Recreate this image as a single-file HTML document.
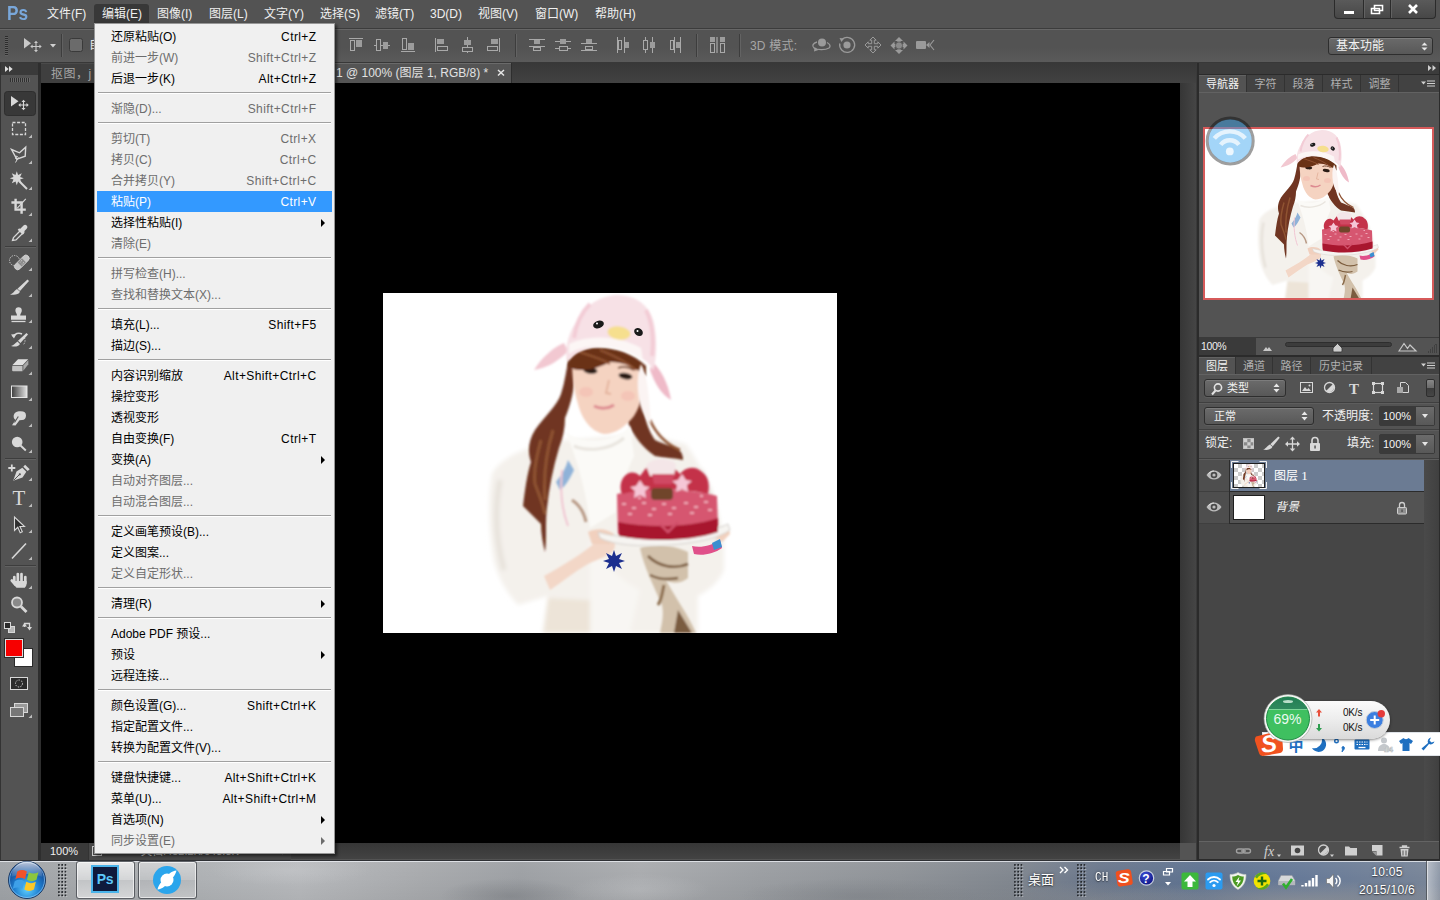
<!DOCTYPE html>
<html lang="zh-CN">
<head>
<meta charset="utf-8">
<title>Photoshop</title>
<style>
*{box-sizing:border-box;margin:0;padding:0}
html,body{width:1440px;height:900px;overflow:hidden;background:#535353}
body{position:relative;font-family:"Liberation Sans","Noto Sans CJK SC",sans-serif;font-size:12px;color:#e6e6e6}
.abs{position:absolute}
svg{position:absolute;overflow:visible}
/* ---------- menubar ---------- */
#menubar{left:0;top:0;width:1440px;height:29px;background:#535353;border-bottom:1px solid #3c3c3c}
#menubar .mi{position:absolute;top:6px;height:18px;line-height:17px;font-size:12px;color:#f0f0f0;white-space:nowrap}
#pslogo{left:7px;top:0;font-size:21px;font-weight:bold;color:#79a7da;line-height:26px;transform:scaleX(.82);transform-origin:left}
#editbtn{left:94px;top:4px;width:55px;height:20px;background:#383838;border-radius:3px 3px 0 0}
/* ---------- options bar ---------- */
#optbar{left:0;top:29px;width:1440px;height:34px;background:linear-gradient(#535353 55%,#5a5a5a);border-top:1px solid #676767;border-bottom:1px solid #383838}
/* ---------- tabs ---------- */
#tabbar{left:41px;top:63px;width:1156px;height:20px;background:linear-gradient(#383838,#424242)}
/* ---------- canvas ---------- */
#canvas{left:41px;top:83px;width:1139px;height:760px;background:#000}
#doc{left:383px;top:293px;width:454px;height:340px;background:#fff;overflow:hidden}
/* ---------- edit menu ---------- */
#editmenu{left:94px;top:23px;width:241px;height:831px;background:#f0f0f0;border:1px solid #979797;padding:2px;box-shadow:2px 2px 3px rgba(0,0,0,.55)}
#editmenu .it{position:relative;height:21px;line-height:23px;overflow:hidden;font-size:12px;color:#000;white-space:nowrap}
#editmenu .it .l{position:absolute;left:14px;top:0}
#editmenu .it .s{position:absolute;right:15.500px;top:0;letter-spacing:.4px}
#editmenu .it.dis{color:#6d6d6d}
#editmenu .it.hl{background:#3399ff;color:#fff}
#editmenu .sep{height:9px;position:relative}
#editmenu .sep:after{content:"";position:absolute;left:1px;right:1px;top:3px;height:1px;background:#a0a0a0;border-bottom:1px solid #fff;box-sizing:content-box}
#editmenu .ar{position:absolute;right:7px;top:6.500px;width:0;height:0;border-left:4px solid #000;border-top:4px solid transparent;border-bottom:4px solid transparent}
#editmenu .dis .ar{border-left-color:#6d6d6d}
/* ---------- toolbox ---------- */
#toolcol{left:0;top:63px;width:41px;height:797px;background:#535353;border-left:1px solid #333;border-right:3px solid #2e2e2e;box-shadow:inset 0 0 0 0 #000}
#toolhdr{left:1px;top:63px;width:37px;height:12px;background:#3a3a3a}
#toolgrip{left:10px;top:78px;width:20px;height:4px;background:repeating-linear-gradient(90deg,#2f2f2f 0 1px,#6a6a6a 1px 2px)}
#wsbtn{left:1328px;top:37px;width:105px;height:18px;border:1px solid #2e2e2e;border-radius:3px;background:linear-gradient(#6a6a6a,#585858);box-shadow:inset 0 1px 0 #7d7d7d;font-size:12px;line-height:17px;color:#f2f2f2;padding-left:7px}
#winctl{left:1334px;top:0;width:102px;height:19px;border:1px solid #2b2b2b;border-top:0;border-radius:0 0 4px 4px;background:linear-gradient(#5a5a5a,#474747)}
#winctl i{position:absolute;top:0;width:1px;height:18px;background:#2b2b2b;box-shadow:1px 0 0 #626262}
#tab1{left:41px;top:63px;width:159px;height:20px;background:#3f3f3f;border-right:1px solid #2e2e2e;box-shadow:inset 0 1px 0 #4a4a4a;font-size:12px;color:#a6a6a6;padding-left:10px;letter-spacing:.5px;line-height:23px;overflow:hidden}
#tab2{left:200px;top:63px;width:312px;height:20px;background:#545454;box-shadow:inset 0 1px 0 #6a6a6a;font-size:12px;line-height:21px;color:#e2e2e2;border-right:1px solid #2e2e2e}
#tab2 span{position:absolute;left:136px;top:0;white-space:nowrap}
#tab2 b{position:absolute;right:180px;top:0;font-weight:normal;white-space:nowrap}
/* ---------- right panels ---------- */
#vscroll{left:1180px;top:83px;width:16px;height:760px;background:linear-gradient(90deg,#363636,#454545)}
#corner{left:1180px;top:843px;width:16px;height:16px;background:#545454}
#dock{left:1196px;top:63px;width:244px;height:797px;background:#2b2b2b;border-left:1px solid #3a3a3a}
#dockhdr{left:1199px;top:63px;width:240px;height:11px;background:#3c3c3c}
.tabs{background:#424242;height:17px;font-size:11px}
.tabs span{position:absolute;top:0;height:17px;line-height:19px;text-align:center;color:#b0b0b0;background:#424242;border-right:1px solid #333;white-space:nowrap}
.tabs span.on{background:#535353;color:#f4f4f4;height:18px;box-shadow:inset 0 1px 0 #626262}
#navtabs{left:1199px;top:75px;width:240px}
#navbody{left:1199px;top:92px;width:240px;height:245px;background:#535353;border-top:1px solid #626262}
#navthumb{left:1203px;top:127px;width:231px;height:173px;background:#fff;border:2px solid #d65a5a;overflow:hidden}
#wifi{left:1205px;top:116px;width:50px;height:50px}
#navfoot{left:1199px;top:337px;width:240px;height:18px;background:#535353;border-top:1px solid #3a3a3a}
#navzoom{position:absolute;left:0;top:0;width:57px;height:17px;background:#3a3a3a;color:#f0f0f0;font-size:10.500px;line-height:17px;padding-left:2px;letter-spacing:-.4px}
#laytabs{left:1199px;top:357px;width:240px}
#laybody{left:1199px;top:374px;width:240px;height:86px;background:#535353;border-top:1px solid #626262}
.dd{border:1px solid #2e2e2e;border-radius:3px;background:linear-gradient(#6b6b6b,#585858);box-shadow:inset 0 1px 0 #7c7c7c,0 1px 0 #5e5e5e;font-size:11px;color:#f2f2f2}
.dd span{position:absolute;top:0;line-height:16px;white-space:nowrap}
.dd .ud{right:5px;top:3px}
.hr{left:1199px;width:240px;height:2px;background:#3f3f3f;border-bottom:1px solid #5d5d5d}
.lbl{font-size:12px;line-height:18px;color:#f0f0f0;white-space:nowrap}
.fld{width:56px;height:20px;border:1px solid #3a3a3a;border-radius:2px;background:#3a3a3a}
.fld span{position:absolute;left:3px;top:0;font-size:11px;line-height:18px;color:#f4f4f4}
.fld i{position:absolute;left:35px;top:0;width:19px;height:18px;background:linear-gradient(#6b6b6b,#585858);border-left:1px solid #3a3a3a}
.fld i:after{content:"";position:absolute;left:6px;top:7px;border:3.500px solid transparent;border-top:4px solid #e6e6e6;border-bottom:0}
#lrow1{left:1230px;top:460px;width:194px;height:31px;background:#6b7b93}
#lrow2{left:1230px;top:492px;width:194px;height:31px;background:#535353}
#eyecol{left:1199px;top:460px;width:30px;height:64px;background:linear-gradient(#4e4e4e 0 31px,#3f3f3f 31px 32px,#4e4e4e 32px 63px,#3f3f3f 63px)}
#lthumb1{left:1233px;top:463px;width:32px;height:25px;border:1px solid #1e1e1e;background:#fff;background-image:linear-gradient(45deg,#ccc 25%,transparent 25%,transparent 75%,#ccc 75%),linear-gradient(45deg,#ccc 25%,transparent 25%,transparent 75%,#ccc 75%);background-size:8px 8px;background-position:0 0,4px 4px;overflow:hidden}
#lthumb2{left:1233px;top:495px;width:32px;height:25px;border:1px solid #1e1e1e;background:#fff}
#layempty{left:1199px;top:524px;width:225px;height:317px;background:#464646}
#layscroll{left:1424px;top:460px;width:15px;height:381px;background:linear-gradient(90deg,#4a4a4a,#404040)}
#layfoot{left:1199px;top:841px;width:240px;height:18px;background:#505050;border-top:1px solid #646464}
/* ---------- taskbar ---------- */
#taskbar{left:0;top:860px;width:1440px;height:40px;overflow:hidden;background:linear-gradient(90deg,#9fa3a7 0,#a4a7aa 60px,#aeb1b4 200px,#b6b8bb 300px,#a8aaad 420px,#9da0a4 520px,#a9abae 640px,#9b9ea2 760px,#8f9398 900px,#81878f 1010px,#6a778c 1100px,#5f7391 1200px,#677a98 1300px,#7a8698 1440px)}
#tbclouds{position:absolute;left:0;top:0;width:1440px;height:40px;background:radial-gradient(ellipse 70px 16px at 640px 30px,rgba(190,192,195,.5),transparent),radial-gradient(ellipse 80px 16px at 290px 10px,rgba(200,202,205,.45),transparent),radial-gradient(ellipse 70px 18px at 510px 36px,rgba(125,128,133,.55),transparent),radial-gradient(ellipse 120px 18px at 860px 36px,rgba(120,124,130,.4),transparent),radial-gradient(ellipse 220px 22px at 1300px 42px,rgba(150,152,156,.8),transparent),radial-gradient(ellipse 120px 18px at 1090px 40px,rgba(140,144,150,.6),transparent)}
#tbshade{position:absolute;left:0;top:0;width:1440px;height:40px;border-top:1px solid #2e3034;box-shadow:inset 0 1px 0 rgba(235,238,242,.8);background:linear-gradient(rgba(255,255,255,.05),rgba(255,255,255,0) 45%,rgba(0,0,0,.04))}
.tbgrip{position:absolute;top:4px;width:10px;height:33px;background-image:radial-gradient(circle at 1px 1px,#23262a .75px,transparent 1.150px),radial-gradient(circle at 2px 2px,rgba(255,255,255,.45) .6px,transparent 1px);background-size:3.300px 3.400px}
.tbbtn{position:absolute;top:1px;width:59px;height:38px;border:1px solid rgba(60,64,70,.8);border-radius:3px;background:linear-gradient(rgba(255,255,255,.72),rgba(255,255,255,.5) 50%,rgba(255,255,255,.32) 50%,rgba(255,255,255,.55));box-shadow:inset 0 0 0 1px rgba(255,255,255,.6)}
.tbbtn.b2{background:linear-gradient(rgba(255,255,255,.42),rgba(255,255,255,.25) 50%,rgba(255,255,255,.1) 50%,rgba(255,255,255,.3))}
#psicon{left:91px;top:5px;width:28px;height:28px;background:#0f1a3c;border:2px solid #4bb4ea;color:#5cc8fa;font-weight:bold;font-size:14px;line-height:24px;text-align:center;letter-spacing:-.2px}
.tbt{color:#fff;white-space:nowrap;text-shadow:0 0 3px rgba(0,0,0,.55),0 1px 1px rgba(0,0,0,.4)}
#showdesk{left:1426px;top:1px;width:14px;height:39px;border-left:1px solid rgba(60,64,70,.7);background:linear-gradient(90deg,rgba(255,255,255,.45),rgba(255,255,255,.15));box-shadow:inset 1px 0 0 rgba(255,255,255,.5)}
/* ---------- status + widgets ---------- */
#status{left:41px;top:843px;width:1139px;height:16px;background:linear-gradient(#363636,#434343)}
#stzoom{position:absolute;left:0;top:0;width:47px;height:17px;background:#3a3a3a;font-size:11px;line-height:17px;color:#f0f0f0;padding-left:9px}
#stinfo{position:absolute;left:47px;top:0;width:203px;height:17px;background:#484848;border-left:1px solid #333}
#stinfo span{position:absolute;left:52px;top:0;font-size:11px;line-height:17px;color:#e0e0e0;white-space:nowrap}
#sgbar{left:1262px;top:732px;width:178px;height:24px;background:#fff;border:1px solid #dfe3e8;border-right:0;overflow:hidden}
#pill{left:1298px;top:701px;width:92px;height:38px;border-radius:0 19px 19px 0;background:linear-gradient(#fbfbfb,#ececec 50%,#dadada);box-shadow:0 1px 3px rgba(0,0,0,.5)}
#pill span{position:absolute;left:45px;font-size:10px;line-height:12px;color:#111;letter-spacing:-.2px}
</style>
</head>
<body>

<!-- ===== MENUBAR ===== -->
<div id="menubar" class="abs">
  <div id="pslogo" class="abs">Ps</div>
  <div id="editbtn" class="abs"></div>
  <div class="mi" style="left:47px">文件(F)</div>
  <div class="mi" style="left:102px">编辑(E)</div>
  <div class="mi" style="left:157px">图像(I)</div>
  <div class="mi" style="left:209px">图层(L)</div>
  <div class="mi" style="left:264px">文字(Y)</div>
  <div class="mi" style="left:320px">选择(S)</div>
  <div class="mi" style="left:375px">滤镜(T)</div>
  <div class="mi" style="left:430px">3D(D)</div>
  <div class="mi" style="left:478px">视图(V)</div>
  <div class="mi" style="left:535px">窗口(W)</div>
  <div class="mi" style="left:595px">帮助(H)</div>
</div>

<!-- ===== OPTIONS BAR ===== -->
<div id="optbar" class="abs"></div>
<svg id="optsvg" width="1440" height="34" style="left:0;top:29px" viewBox="0 29 1440 34"><path d="M6.500 36v19" stroke="#2c2c2c" stroke-width="3" stroke-dasharray="1 1"/><path d="M6.500 37v19" stroke="#6a6a6a" stroke-width="3" stroke-dasharray="1 1" opacity=".6"/><path d="M24 38v10.500l7-5.200z" fill="#c9c9c9"/><path d="M36 42v9M31.500 46.500h9" stroke="#c9c9c9" stroke-width="1.100"/><path d="M36 40.800l-2 2.300h4zM36 52.200l-2-2.300h4zM30.300 46.500l2.300-2v4zM41.700 46.500l-2.300-2v4z" fill="#c9c9c9"/><path d="M50 44h6l-3 3.500z" fill="#d0d0d0"/><path d="M61.500 34v23" stroke="#3d3d3d"/><path d="M62.500 34v23" stroke="#616161"/><rect x="69.500" y="38.500" width="13" height="13" rx="2" fill="#6b6b6b" stroke="#3a3a3a"/><path d="M349 38.5H363" stroke="#a9a9a9"/><rect x="350.5" y="40.5" width="4" height="10" fill="none" stroke="#a9a9a9"/><rect x="356" y="40" width="6" height="7" fill="#9c9c9c"/><path d="M374 45.5H390" stroke="#a9a9a9"/><rect x="376.500" y="39.500" width="4" height="11" fill="#535353" stroke="#a9a9a9"/><rect x="383" y="42" width="5" height="7" fill="#9c9c9c"/><path d="M401 51.5H415" stroke="#a9a9a9"/><rect x="402.5" y="38.5" width="4" height="11" fill="none" stroke="#a9a9a9"/><rect x="408" y="43" width="6" height="7" fill="#9c9c9c"/><path d="M435.5 38V52" stroke="#a9a9a9"/><rect x="437" y="39" width="7" height="5" fill="#9c9c9c"/><rect x="437.5" y="46.5" width="10" height="4" fill="none" stroke="#a9a9a9"/><path d="M467.5 37V53" stroke="#a9a9a9"/><rect x="464" y="40" width="7" height="5" fill="#9c9c9c"/><rect x="462.500" y="47.500" width="10" height="4" fill="#535353" stroke="#a9a9a9"/><path d="M499.5 38V52" stroke="#a9a9a9"/><rect x="491" y="39" width="7" height="5" fill="#9c9c9c"/><rect x="487.5" y="46.5" width="10" height="4" fill="none" stroke="#a9a9a9"/><path d="M515.5 34v23" stroke="#3d3d3d"/><path d="M516.5 34v23" stroke="#636363"/><path d="M529 39.5H545" stroke="#a9a9a9"/><rect x="534" y="40" width="6" height="4" fill="#9c9c9c"/><path d="M529 46.5H545" stroke="#a9a9a9"/><rect x="533.5" y="47.5" width="7" height="3" fill="none" stroke="#a9a9a9"/><path d="M555 41.5H571" stroke="#a9a9a9"/><rect x="560" y="39" width="6" height="5" fill="#9c9c9c"/><path d="M555 48.5H571" stroke="#a9a9a9"/><rect x="559.500" y="46.500" width="8" height="4" fill="#535353" stroke="#a9a9a9"/><path d="M581 43.5H597" stroke="#a9a9a9"/><rect x="586" y="39" width="6" height="4" fill="#9c9c9c"/><path d="M581 50.5H597" stroke="#a9a9a9"/><rect x="585.5" y="46.5" width="7" height="3" fill="none" stroke="#a9a9a9"/><path d="M617.5 37V53" stroke="#a9a9a9"/><rect x="618.5" y="40.5" width="3" height="9" fill="none" stroke="#a9a9a9"/><path d="M624.5 37V53" stroke="#a9a9a9"/><rect x="625" y="42" width="4" height="6" fill="#9c9c9c"/><path d="M645.5 37V53" stroke="#a9a9a9"/><rect x="643.500" y="40.500" width="4" height="9" fill="#535353" stroke="#a9a9a9"/><path d="M652.5 37V53" stroke="#a9a9a9"/><rect x="650" y="42" width="5" height="6" fill="#9c9c9c"/><path d="M674.5 37V53" stroke="#a9a9a9"/><rect x="670.5" y="40.5" width="3" height="9" fill="none" stroke="#a9a9a9"/><path d="M680.5 37V53" stroke="#a9a9a9"/><rect x="676" y="42" width="4" height="6" fill="#9c9c9c"/><path d="M696.5 34v23" stroke="#3d3d3d"/><path d="M697.5 34v23" stroke="#636363"/><rect x="710" y="37" width="5" height="5" fill="#9c9c9c"/><rect x="710.5" y="43.5" width="4" height="9" fill="none" stroke="#a9a9a9"/><rect x="720" y="37" width="5" height="5" fill="#9c9c9c"/><path d="M717 37v16" stroke="#a9a9a9" stroke-width="1.200"/><rect x="720.5" y="43.5" width="4" height="9" fill="none" stroke="#a9a9a9"/><path d="M739.5 34v23" stroke="#3d3d3d"/><path d="M740.5 34v23" stroke="#636363"/><circle cx="822" cy="42.500" r="4" fill="#9a9a9a"/><path d="M817 42c-4 1-5.500 4-3 6 3 2 11 2.500 15 0 2-1.500 1-4-2-5.500" fill="none" stroke="#9a9a9a" stroke-width="1.300"/><path d="M814 51.500l0.500-4.500 4 3z" fill="#9a9a9a"/><circle cx="847" cy="45" r="3.600" fill="#9a9a9a"/><path d="M842 39.500a7.500 7.500 0 1 1-2.200 4" fill="none" stroke="#9a9a9a" stroke-width="1.300"/><path d="M839.500 38l4.500 0.500-2.500 3.500z" fill="#9a9a9a"/><path d="M873.0 37.0L876.2 40.2L874.3 40.2L874.3 43.7L877.8 43.7L877.8 41.8L881.0 45.0L877.8 48.2L877.8 46.3L874.3 46.3L874.3 49.8L876.2 49.8L873.0 53.0L869.8 49.8L871.7 49.8L871.7 46.3L868.2 46.3L868.2 48.2L865.0 45.0L868.2 41.8L868.2 43.7L871.7 43.7L871.7 40.2L869.8 40.2z" fill="none" stroke="#9a9a9a" stroke-width="1"/><path d="M899.0 37.0L903.0 41.0L900.6 41.0L900.6 43.9L903.5 43.9L903.5 41.5L907.5 45.5L903.5 49.5L903.5 47.1L900.6 47.1L900.6 50.0L903.0 50.0L899.0 54.0L895.0 50.0L897.4 50.0L897.4 47.1L894.5 47.1L894.5 49.5L890.5 45.5L894.5 41.5L894.5 43.9L897.4 43.9L897.4 41.0L895.0 41.0z" fill="#9a9a9a"/><circle cx="899" cy="45.500" r="3.600" fill="#8a8a8a" stroke="#535353" stroke-width=".8"/><rect x="916" y="41" width="10" height="8" rx="1" fill="#9a9a9a"/><path d="M926 45l3.500-3v6z" fill="#9a9a9a"/><path d="M934 40l-4 5 4 5" fill="none" stroke="#9a9a9a" stroke-width="1.100"/></svg><div class="abs" style="left:89px;top:37px;font-size:12px;color:#e6e6e6;line-height:16px">自动选择:</div><div class="abs" style="left:750px;top:38px;font-size:12px;color:#a6a6a6;line-height:16px;letter-spacing:.2px">3D 模式:</div><div id="wsbtn" class="abs"><span>基本功能</span><svg width="7" height="9" style="right:4px;top:4px" viewBox="0 0 7 9"><path d="M0.500 3.500l3-3 3 3zM0.500 5.500l3 3 3-3z" fill="#e8e8e8"/></svg></div>
<div id="winctl" class="abs"><i style="left:28px"></i><i style="left:55px"></i>
<svg width="102" height="19" style="left:0;top:0" viewBox="0 0 102 19"><rect x="9" y="11" width="10" height="3" fill="#fff"/><path d="M39.500 5.500h8v5h-8zM36.500 8.500h8v5h-8z" fill="#444" stroke="#fff" stroke-width="1.600"/><path d="M74 5l8 8M82 5l-8 8" stroke="#fff" stroke-width="2.600"/></svg></div>

<!-- ===== TABS ===== -->
<div id="tabbar" class="abs"></div>
<div id="tab1" class="abs">抠图，j</div><div id="tab2" class="abs"><b>未标题-</b><span>1 @ 100% (图层 1, RGB/8) *</span><svg width="8" height="8" style="left:297px;top:6px" viewBox="0 0 8 8"><path d="M1 1l6 5.500M7 1l-6 5.500" stroke="#e6e6e6" stroke-width="1.500"/></svg></div>

<!-- ===== CANVAS ===== -->
<div id="canvas" class="abs"></div>
<svg width="0" height="0" style="left:0;top:0"><defs><filter id="b1" x="-10%" y="-10%" width="120%" height="120%"><feGaussianBlur stdDeviation="1.1"/></filter><filter id="b2" x="-10%" y="-10%" width="120%" height="120%"><feGaussianBlur stdDeviation="2.200"/></filter><symbol id="girl" viewBox="383 293 454 340"><g filter="url(#b2)"><path d="M566 440c-30 4-64 14-74 34-4 20-4 56 2 88 6 20 14 32 24 43l30-9-6 37h156l0-37c12-6 22-16 26-26l0-28c-4-24-8-44-16-60-8-16-16-30-22-38l-40-10z" fill="#f4f1ec"/><path d="M500 480c-6 30-4 60 4 90M700 470c10 20 16 50 18 76" fill="none" stroke="#e6e1da" stroke-width="5"/><path d="M548 598l-4 35h60l2-32z" fill="#ede4d8"/><path d="M590 540c10 20 30 40 50 50l-10 43h-40z" fill="#f8f6f3"/></g><g filter="url(#b1)"><path d="M640 548c14-5 34-3 48 4l0 26c-8 6-16 6-22 2 8 16 22 34 30 53h-36c2-10 4-18 2-28-8-18-18-38-22-57z" fill="#d2c1ab"/><path d="M648 556c10 10 26 14 40 8M650 575c8 4 18 5 28 3" fill="none" stroke="#7b5b3c" stroke-width="2.500"/><path d="M678 610l14 23h-18z" fill="#7a5c40"/><path d="M664 585c-2 8-2 14-6 20" stroke="#8a6a48" stroke-width="3" fill="none"/></g><g filter="url(#b1)"><path d="M569 358c-3 12-4 24-8 36-4 12-18 24-26 36-6 10-8 20-4 32-4 12-6 28-8 44 6 6 12 12 18 18 0 10 2 20 4 28 2-14 0-30 2-44 2-20 6-40 12-60 4-10 6-20 6-30 6-14 10-30 10-50z" fill="#6f3620"/><path d="M541 440c-4 14-8 30-6 44 4 10 8 20 10 30M553 430c-6 20-10 44-8 70" fill="none" stroke="#8f5232" stroke-width="3"/><path d="M641 372c4 14 2 30 4 44 2 10 6 18 10 24 8 4 18 6 26 12 2 4 2 6 2 8-8-2-18-2-28-4-12-8-22-20-28-36z" fill="#6f3620"/><path d="M650 420c6 14 16 24 30 30" fill="none" stroke="#8f5232" stroke-width="2.500"/></g><g filter="url(#b1)"><path d="M566 432c12 12 48 12 64-6l4 30c-8 16-14 36-18 56l-26 16c-2-30-12-66-24-96z" fill="#fbfaf7"/><path d="M574 446c14 6 36 4 50-8" fill="none" stroke="#e9e5df" stroke-width="3"/></g><g filter="url(#b1)"><path d="M572 362c10-8 30-10 46-6 12 2 22 8 26 16 0 16-2 32-10 44-8 10-18 18-30 18-12-2-22-14-26-30-4-12-6-28-6-42z" fill="#f5d3c1"/><path d="M594 406c6 3 14 3 20-1" fill="none" stroke="#dd8a90" stroke-width="3"/><ellipse cx="590.500" cy="370.500" rx="7" ry="3.200" fill="#2c1a14" transform="rotate(5 590 370)"/><ellipse cx="625.500" cy="376" rx="7" ry="3.200" fill="#2c1a14" transform="rotate(10 625 376)"/><path d="M582 363c5-3 12-3 17 0M618 368c5-2 11-1 16 2" fill="none" stroke="#6a3a24" stroke-width="1.800"/><path d="M609 380l-3 13 5 1" stroke="#e3b29c" stroke-width="1.800" fill="none"/><ellipse cx="586" cy="392" rx="7" ry="5" fill="#f3bdb0" opacity=".6"/><ellipse cx="628" cy="396" rx="7" ry="5" fill="#f3bdb0" opacity=".6"/><path d="M568 366c0-10 8-16 24-18 18-2 40 4 54 18l0 10c-10-8-22-14-36-14-8 4-18 8-26 8-6 0-12 0-16-4z" fill="#6a3018"/><path d="M580 352c10 4 20 6 30 12M600 350c10 4 24 10 36 20" fill="none" stroke="#8f5232" stroke-width="2"/></g><g filter="url(#b1)"><path d="M564 343c-10 4-22 14-30 27 12-2 24-8 34-19z" fill="#f2c8d1"/><path d="M652 362c8 6 16 20 19 38-10-6-16-16-21-30z" fill="#efbac8"/><path d="M641 364c6 10 8 30 10 60-6-6-10-14-12-24-2-14-2-26 2-36z" fill="#fbf4f3"/><path d="M567 362c-2-12 0-26 8-38 8-16 22-28 42-29 22 0 36 14 38 34 2 14 2 28-2 42-2-6-6-10-12-13-20-12-44-16-62-6-4 2-8 6-12 10z" fill="#f7e1e6"/><path d="M569 354c18-12 50-10 74 6l-2-12c-22-12-50-14-72-4z" fill="#fcf6f5"/><path d="M590 304c-8 8-14 20-16 34M646 310c6 12 8 28 6 46" fill="none" stroke="#f3ccd6" stroke-width="4"/><ellipse cx="619" cy="333" rx="11.500" ry="6.500" fill="#f6df8e" transform="rotate(8 619 333)"/></g><ellipse cx="598.500" cy="324.500" rx="5.500" ry="3.800" fill="#1a1a1a" transform="rotate(-18 598.500 324.500)"/><ellipse cx="638.500" cy="332" rx="4.600" ry="3.800" fill="#1a1a1a" transform="rotate(35 638.500 332)"/><circle cx="597" cy="323.500" r="1" fill="#fff"/><circle cx="637.500" cy="331" r="1" fill="#fff"/><g filter="url(#b1)"><path d="M544 576c18-10 38-22 52-34l16-4c4 4 4 10 0 14-8 6-16 8-24 12-14 8-26 18-38 26z" fill="#f3d7c7"/><path d="M588 532c8-4 18-4 26 2l-4 10-18 0z" fill="#f1d0be"/><path d="M722 528c4 0 8 2 8 6l-8 8-6-4z" fill="#f1d0be"/></g><g filter="url(#b1)"><path d="M598 532c30 10 100 6 130-8l2 6c-20 16-104 22-130 8z" fill="#f6f4f1" stroke="#d4d0cc" stroke-width="1"/><path d="M617 494c30-6 72-6 100 2l1 34c-30 10-72 10-100 4z" fill="#d65670"/><path d="M618 522c30 6 70 6 100-4l0 14c-30 10-70 10-99 4z" fill="#a8152f"/><path d="M622 480c4-8 12-10 18-4l6-8c8-4 20-4 28 0l6 6c6-8 16-8 22-2 6 4 8 12 6 22-22-6-62-6-86 0-2-4-2-10 0-14z" fill="#c4304a"/><path d="M646 466c4-8 22-10 30-2l-2 12h-24z" fill="#f4e6e8"/><path d="M652 474h22l-2 10h-18z" fill="#d04a64"/><path d="M636 486l4-6 4 6 6 1-5 4 1 7-6-3-6 3 1-7-5-4zM678 480l4-6 4 6 6 1-5 4 1 7-6-3-6 3 1-7-5-4z" fill="#f5c6d6"/><rect x="651" y="488" width="22" height="12" rx="4" fill="#70442c"/><path d="M622 504h4M632 508h4M642 503h4M652 509h4M662 504h4M672 508h4M684 503h4M694 507h4M704 502h4M628 514h4M648 515h4M668 514h4M690 513h4M708 510h4M638 498h3M700 496h3" stroke="#f0a8b8" stroke-width="2.200"/><path d="M660 524l8 8 10-10" stroke="#d0506a" stroke-width="2.500" fill="none"/></g><path d="M614 550l2 6 6-3-3 6 6 2-6 2 3 6-6-3-2 6-2-6-6 3 3-6-6-2 6-2-3-6 6 3z" fill="#1c2f8f"/><path d="M692 546c8 2 20 0 28-6l2 8c-8 6-20 8-28 6z" fill="#e0508a"/><path d="M712 543l8-4 2 8-8 3z" fill="#3a8fd0"/><g filter="url(#b1)"><path d="M556 482c6-8 10-14 12-22l6 10c-4 8-8 16-14 20z" fill="#8fb2d8"/><path d="M572 500c6 4 12 12 14 22" stroke="#b89a86" stroke-width="3" fill="none"/><path d="M562 470c-2 20 0 40 6 56" stroke="#f1c6d2" stroke-width="2" fill="none"/></g></symbol></defs></svg>
<div id="doc" class="abs"><svg width="454" height="340" style="left:0;top:0"><use href="#girl"/></svg></div>

<!-- ===== TOOLBOX ===== -->
<div id="toolcol" class="abs"></div>
<div id="toolhdr" class="abs"><svg width="8" height="6" style="left:3.500px;top:2.500px" viewBox="0 0 8 6"><path d="M0 0l3.700 3-3.700 3zM4 0l3.700 3-3.700 3z" fill="#e0e0e0"/></svg></div>
<div id="toolgrip" class="abs"></div>
<svg id="toolsvg" width="41" height="800" style="left:0;top:0" viewBox="0 0 41 800"><rect x="4.5" y="91.5" width="31" height="24" rx="3" fill="#383838" stroke="#2e2e2e"/><path d="M11 96v10.500l7.500-5.200z" fill="#d8d8d8"/><path d="M23.500 101.500v7M20 105h7" stroke="#d8d8d8" stroke-width="1.100" fill="none"/><path d="M23.500 99.800l-2 2.200h4zM23.500 110.200l-2-2.200h4zM18.300 105l2.200-2v4zM28.700 105l-2.200-2v4z" fill="#d8d8d8"/><rect x="12.500" y="122.500" width="13" height="12" fill="none" stroke="#d8d8d8" stroke-width="1.300" stroke-dasharray="3 1.600"/><path d="M32 138 v-3.500 l-3.500 3.500z" fill="#bdbdbd"/><path d="M11.500 149.500l8 3.300 6.200-5.600-0.500 9-8.400 3z" fill="none" stroke="#d8d8d8" stroke-width="1.400"/><path d="M18.500 157.500l-2-1.500-1 2.500 2 .5-2 3.500" fill="none" stroke="#d8d8d8" stroke-width="1"/><path d="M32 164 v-3.500 l-3.500 3.500z" fill="#bdbdbd"/><path d="M19 181l8 8" stroke="#d8d8d8" stroke-width="2"/><g transform="translate(.8 -1.800)"><path d="M16 173l1.300 3.700 3.700-1.700-1.700 3.700 3.700 1.300-3.700 1.300 1.700 3.700-3.700-1.700-1.300 3.700-1.300-3.700-3.700 1.700 1.700-3.700-3.700-1.300 3.700-1.300-1.700-3.700 3.700 1.700z" fill="#d8d8d8"/></g><path d="M32 190 v-3.500 l-3.500 3.500z" fill="#bdbdbd"/><path d="M15.600 198.800v10.800h10.200M11.400 202.500h10.200v11.300" fill="none" stroke="#d8d8d8" stroke-width="2.400"/><path d="M17.300 208.200l8.500-9.400" stroke="#d8d8d8" stroke-width="1.100"/><path d="M32 216 v-3.500 l-3.500 3.500z" fill="#bdbdbd"/><path d="M12.500 240.500l1-3 8-8 2.500 2.500-8 8z" fill="none" stroke="#d8d8d8" stroke-width="1.300"/><path d="M20 229l3.500-3.500a2.200 2.200 0 0 1 3.200 3.200l-3.500 3.500 1 1-1.500 1.500-5-5 1.500-1.500z" fill="#d8d8d8"/><path d="M32 242 v-3.500 l-3.500 3.500z" fill="#bdbdbd"/><path d="M5 246.500h31" stroke="#3d3d3d"/><path d="M5 247.500h31" stroke="#616161"/><circle cx="14.500" cy="260.500" r="5" fill="none" stroke="#d8d8d8" stroke-width="1" stroke-dasharray="1.200 1.300"/><g transform="rotate(-45 21.800 262.400)"><rect x="12.800" y="259.200" width="18" height="6.400" rx="3.200" fill="#c4c4c4" stroke="#d8d8d8" stroke-width=".8"/><rect x="18.800" y="259.600" width="6" height="5.600" fill="#8a8a8a"/><path d="M20.300 261h3M20.300 263.800h3" stroke="#c4c4c4" stroke-width="1" stroke-dasharray="1 1"/></g><path d="M32 271 v-3.500 l-3.500 3.500z" fill="#bdbdbd"/><path d="M27.500 279.500l1.500 1.500-9 10-2.500-2.200z" fill="#d8d8d8"/><path d="M17 289l3 2.800c-1.500 3-5.500 3.500-10 2.700 3.500-1 4-3.500 7-5.500z" fill="#d8d8d8"/><path d="M32 297 v-3.500 l-3.500 3.500z" fill="#bdbdbd"/><path d="M17 315.500c0-2-1.600-2.800-1.600-5a3.200 3.200 0 0 1 6.400 0c0 2.200-1.600 3-1.600 5h5.800v4.300h-15v-4.300z" fill="#d8d8d8"/><path d="M11.500 321.500h14" stroke="#d8d8d8" stroke-width="1.300"/><path d="M32 323 v-3.500 l-3.500 3.500z" fill="#bdbdbd"/><path d="M26.500 333l1.500 1.500-7.500 8.500-2.500-2.200z" fill="#d8d8d8"/><path d="M17.500 341.500l2.500 2.500c-2 3-5.500 3-9 2 3-0.500 3.500-2.500 6.500-4.500z" fill="#d8d8d8"/><path d="M13 337a6.500 6.500 0 0 1 9-3" fill="none" stroke="#d8d8d8" stroke-width="1.500"/><path d="M11 334.500l5.500-0.500-2.500 4.500z" fill="#d8d8d8"/><path d="M24.500 338a6 6 0 0 1-1.500 7" fill="none" stroke="#d8d8d8" stroke-dasharray="1.200 1.200"/><path d="M32 349 v-3.500 l-3.500 3.500z" fill="#bdbdbd"/><path d="M12.500 365l5.500-5.800h10.200l-5.400 5.800z" fill="#e0e0e0"/><path d="M12.300 365.800h10.200v5.400h-9.400a1 1 0 0 1-1-1z" fill="#c2c2c2"/><path d="M23.300 365.600l5-5.400v4l-5 6.600z" fill="#a8a8a8"/><path d="M32 375 v-3.500 l-3.500 3.500z" fill="#bdbdbd"/><defs><linearGradient id="gr1" x1="0" y1="0" x2="1" y2="0"><stop offset="0" stop-color="#3c3c3c"/><stop offset="1" stop-color="#e4e4e4"/></linearGradient></defs><rect x="11.500" y="386" width="15.500" height="11.500" fill="url(#gr1)" stroke="#e6e6e6" stroke-width="1"/><path d="M32 401 v-3.500 l-3.500 3.500z" fill="#bdbdbd"/><path d="M12 425.300l3.500-5.300c-2-1.500-2.500-4-1.200-6.300 1.300-2 3.700-2.500 6.500-2.500 3.500 0 5.200 1.300 5.200 4.300 0 2.700-1.300 4.300-4 4.600l-2.500 0.200-4 5.300z" fill="#d8d8d8"/><path d="M18.300 416.500l-3.800 6" stroke="#535353" stroke-width="1.100"/><path d="M32 427 v-3.500 l-3.500 3.500z" fill="#bdbdbd"/><circle cx="17.200" cy="442" r="5.300" fill="#d8d8d8"/><path d="M20.500 445.500l5.300 5" stroke="#d8d8d8" stroke-width="1.900"/><path d="M32 453 v-3.500 l-3.500 3.500z" fill="#bdbdbd"/><path d="M5 458.500h31" stroke="#3d3d3d"/><path d="M5 459.500h31" stroke="#616161"/><path d="M11.800 464.500v7M8.300 468h7" stroke="#d8d8d8" stroke-width="1.800"/><path d="M13.200 480.800l3.300-9.300 5.800-3.800 4 4-3.800 5.800z" fill="#d8d8d8"/><path d="M13.800 480.200l5.500-5.500" stroke="#535353" stroke-width="1"/><circle cx="19.800" cy="474.300" r="1.100" fill="#535353"/><path d="M23.300 466.700l1.800-2 4.600 4.600-2 1.800z" fill="#d8d8d8"/><path d="M32 481 v-3.500 l-3.500 3.500z" fill="#bdbdbd"/><text x="19" y="505" text-anchor="middle" font-family="Liberation Serif,serif" font-size="21" fill="#d8d8d8">T</text><path d="M32 507 v-3.500 l-3.500 3.500z" fill="#bdbdbd"/><path d="M14.500 517v13.500l3.300-3.200 2.400 5.400 2.100-1-2.400-5.200h4.600z" fill="#2e2e2e" stroke="#d8d8d8" stroke-width="1.100"/><path d="M32 533 v-3.500 l-3.500 3.500z" fill="#bdbdbd"/><path d="M12 558.500l14-15" stroke="#d8d8d8" stroke-width="1.600"/><path d="M32 560 v-3.500 l-3.500 3.500z" fill="#bdbdbd"/><path d="M5 565.500h31" stroke="#3d3d3d"/><path d="M5 566.500h31" stroke="#616161"/><g stroke="#d8d8d8" stroke-width="2.700" stroke-linecap="round" fill="none"><path d="M14.300 577v6M17.800 574v8M21.500 574v8M25.300 577v6M11.800 580.500l3.500 4"/></g><path d="M13 581h13.600v2.500c0 2-0.800 3-1.800 4.200h-8.300c-1.500-1.500-3-3.500-3.500-5z" fill="#d8d8d8"/><path d="M32 589 v-3.500 l-3.500 3.500z" fill="#bdbdbd"/><circle cx="17" cy="602.500" r="5" fill="#8a8a8a" stroke="#d8d8d8" stroke-width="1.800"/><path d="M21 606.500l5.500 5.500" stroke="#d8d8d8" stroke-width="2.800"/><rect x="8.500" y="626.500" width="6" height="6" fill="#b8b8b8" stroke="#d8d8d8"/><rect x="4.500" y="622.500" width="6" height="6" fill="#2a2a2a" stroke="#d8d8d8"/><path d="M24.500 627v-3.500h5v4" fill="none" stroke="#d8d8d8" stroke-width="1.300"/><path d="M22 626.500l2.500-3.500 2.500 3.500zM27 627l2.500 3.500 2.500-3.500z" fill="#d8d8d8"/><rect x="14.500" y="648.500" width="18" height="18" fill="#fff" stroke="#2b2b2b"/><rect x="4.500" y="638.500" width="19" height="19" fill="#f70000" stroke="#2b2b2b"/><rect x="5.500" y="639.500" width="17" height="17" fill="none" stroke="#e0e0e0"/><rect x="10.500" y="677.500" width="17" height="12" fill="#2b2b2b" stroke="#d8d8d8"/><circle cx="19" cy="683.500" r="3.500" fill="none" stroke="#d8d8d8" stroke-dasharray="1.300 1.300"/><rect x="14.500" y="703.500" width="13" height="9" fill="#9a9a9a" stroke="#d8d8d8"/><rect x="10.500" y="707.500" width="13" height="9" fill="#777" stroke="#d8d8d8"/><path d="M32 718 v-3.500 l-3.500 3.500z" fill="#bdbdbd"/></svg>

<!-- ===== RIGHT PANELS ===== -->
<div id="vscroll" class="abs"></div><div id="corner" class="abs"></div>
<div id="dock" class="abs"></div>
<div id="dockhdr" class="abs"><svg width="9" height="6" style="left:229px;top:2px" viewBox="0 0 9 6"><path d="M0 0l3.500 3-3.500 3zM4.500 0l3.500 3-3.500 3z" fill="#cfcfcf"/></svg></div>
<div id="navtabs" class="abs tabs"><span class="on" style="left:0;width:48px">导航器</span><span style="left:48px;width:38px">字符</span><span style="left:86px;width:38px">段落</span><span style="left:124px;width:38px">样式</span><span style="left:162px;width:38px">调整</span><svg width="14" height="8" style="left:222px;top:5px" viewBox="0 0 14 8"><path d="M0 1.500h5l-2.500 3z" fill="#d0d0d0"/><path d="M6 1h8M6 3.500h8M6 6h8" stroke="#d0d0d0" stroke-width="1.200"/></svg></div>
<div id="navbody" class="abs"></div>
<div id="navthumb" class="abs"><svg width="227" height="170" style="left:0;top:0"><use href="#girl"/></svg></div>
<div id="wifi" class="abs"><svg width="50" height="50" style="left:0;top:0" viewBox="0 0 50 50"><circle cx="25.200" cy="24.900" r="21.700" fill="rgba(60,165,240,.47)"/><circle cx="25.200" cy="24.900" r="23" fill="none" stroke="rgba(0,0,0,.38)" stroke-width="3"/><path d="M9.3 22.4A20.5 20.5 0 0 1 40.3 22.4" fill="none" stroke="#fff" stroke-width="4.300" opacity=".72"/><path d="M15.7 28.7A11.5 11.5 0 0 1 33.9 28.7" fill="none" stroke="#fff" stroke-width="4.300" opacity=".72"/><circle cx="24.800" cy="35.400" r="3.900" fill="#fff" opacity=".8"/></svg></div>
<div id="navfoot" class="abs"><div id="navzoom">100%</div><svg width="180" height="18" style="left:57px;top:0" viewBox="1256 337 180 18"><path d="M1263 350l3-4 1.500 2 1.500-2 3 4z" fill="#c8c8c8"/><rect x="1285.500" y="341.500" width="106" height="4" rx="2" fill="#3c3c3c" stroke="#2e2e2e"/><path d="M1337.500 342.500l4.500 4.500v3a1 1 0 0 1-1 1h-7a1 1 0 0 1-1-1v-3z" fill="#cdcdcd" stroke="#333" stroke-width=".8"/><path d="M1399 350l5-7.500 3.500 5 2.500-3.500 6 6z" fill="none" stroke="#c8c8c8" stroke-width="1.200"/><path d="M1436 343v1M1434 345h3M1432 347h5M1430 349h7M1428 351h9" stroke="#2e2e2e" stroke-dasharray="1 1"/></svg></div>
<div id="laytabs" class="abs tabs"><span class="on" style="left:0;width:37px">图层</span><span style="left:37px;width:37px">通道</span><span style="left:74px;width:38px">路径</span><span style="left:112px;width:61px">历史记录</span><svg width="14" height="8" style="left:222px;top:5px" viewBox="0 0 14 8"><path d="M0 1.500h5l-2.500 3z" fill="#d0d0d0"/><path d="M6 1h8M6 3.500h8M6 6h8" stroke="#d0d0d0" stroke-width="1.200"/></svg></div>
<div id="laybody" class="abs"></div>
<div class="abs dd" style="left:1204px;top:379px;width:82px;height:18px"><svg width="14" height="14" style="left:5px;top:2px" viewBox="0 0 14 14"><circle cx="8" cy="5.500" r="3.600" fill="none" stroke="#e2e2e2" stroke-width="1.600"/><path d="M5.500 8.500l-3.500 4" stroke="#e2e2e2" stroke-width="2"/></svg><span style="left:22px">类型</span><svg class="ud" width="7" height="10" viewBox="0 0 7 10"><path d="M0.500 4l3-3.500 3 3.500zM0.500 6l3 3.500 3-3.500z" fill="#e8e8e8"/></svg></div>
<svg width="140" height="20" style="left:1298px;top:378px" viewBox="1298 378 140 20"><rect x="1300.500" y="382.500" width="12" height="10" fill="none" stroke="#d8d8d8"/><path d="M1302 391l3-4 2 2.500 1.500-1.500 2.500 3z" fill="#d8d8d8"/><circle cx="1309.500" cy="385.500" r="1" fill="#d8d8d8"/><circle cx="1329.500" cy="387.500" r="5" fill="none" stroke="#d8d8d8" stroke-width="1.300"/><path d="M1326 391a5 5 0 0 0 7-7z" fill="#d8d8d8"/><text x="1354" y="393.500" text-anchor="middle" font-family="Liberation Serif,serif" font-weight="bold" font-size="15" fill="#d8d8d8">T</text><rect x="1373.500" y="383.500" width="9" height="9" fill="none" stroke="#d8d8d8" stroke-width="1.200"/><path d="M1372 382h3v3h-3zM1381 382h3v3h-3zM1372 391h3v3h-3zM1381 391h3v3h-3z" fill="#d8d8d8"/><path d="M1400.500 382.500h5l3 3v7h-8z" fill="none" stroke="#d8d8d8"/><rect x="1397" y="387" width="6" height="6" fill="#a8a8a8"/><rect x="1426.500" y="379.500" width="8" height="17" rx="1.500" fill="url(#tg)" stroke="#2e2e2e"/><defs><linearGradient id="tg" x1="0" y1="0" x2="0" y2="1"><stop offset="0" stop-color="#8a8a8a"/><stop offset=".5" stop-color="#6a6a6a"/><stop offset=".5" stop-color="#3c3c3c"/><stop offset="1" stop-color="#474747"/></linearGradient></defs></svg>
<div class="abs hr" style="top:402px"></div>
<div class="abs dd" style="left:1204px;top:407px;width:110px;height:18px"><span style="left:9px">正常</span><svg class="ud" width="7" height="10" viewBox="0 0 7 10"><path d="M0.500 4l3-3.500 3 3.500zM0.500 6l3 3.500 3-3.500z" fill="#e8e8e8"/></svg></div>
<div class="abs lbl" style="left:1322px;top:407px">不透明度:</div>
<div class="abs fld" style="left:1379px;top:406px"><span>100%</span><i></i></div>
<div class="abs hr" style="top:429px"></div>
<div class="abs lbl" style="left:1205px;top:434px">锁定:</div>
<svg width="90" height="18" style="left:1240px;top:435px" viewBox="1240 435 90 18"><rect x="1243.500" y="438.500" width="10" height="10" fill="#8a8a8a" stroke="#bdbdbd"/><path d="M1244 439h3.300v3.300h-3.300zM1250.600 439h3v3.300h-3zM1247.300 442.300h3.300v3.300h-3.300zM1244 445.600h3.300v3h-3.300zM1250.600 445.600h3v3h-3z" fill="#cfcfcf"/><path d="M1278.300 436.500l1.500 1.300-7 8.500-2.500-2z" fill="#d8d8d8"/><path d="M1269.800 444.500l2.700 2.300c-1.500 3-5.500 3.600-9.500 2.700 3-0.800 3.500-3 6.800-5z" fill="#d8d8d8"/><path d="M1292.500 438v12M1286.500 444h12" stroke="#d8d8d8" stroke-width="1.300"/><path d="M1292.500 436.500l-2.800 3h5.600zM1292.500 451.500l-2.800-3h5.600zM1285 444l3-2.800v5.600zM1300 444l-3-2.800v5.600z" fill="#d8d8d8"/><rect x="1310" y="443" width="10" height="8" rx="1" fill="#d8d8d8"/><path d="M1312 443v-2.500a3 3 0 0 1 6 0v2.500" fill="none" stroke="#d8d8d8" stroke-width="1.600"/><rect x="1314.300" y="445.500" width="1.500" height="3" fill="#535353"/></svg>
<div class="abs lbl" style="left:1347px;top:434px">填充:</div>
<div class="abs fld" style="left:1379px;top:434px"><span>100%</span><i></i></div>
<div class="abs hr" style="top:458px"></div>
<div id="lrow1" class="abs"></div><div id="lrow2" class="abs"></div><div id="eyecol" class="abs"></div>
<svg width="16" height="10" style="left:1206px;top:470px" viewBox="0 0 16 10"><path d="M0.500 5c2-3 4.500-4.500 7.500-4.500s5.500 1.500 7.500 4.500c-2 3-4.500 4.500-7.500 4.500s-5.500-1.500-7.500-4.500z" fill="#bdbdbd"/><circle cx="8" cy="5" r="3.300" fill="#4a4a4a"/><circle cx="8" cy="5" r="1.600" fill="#bdbdbd"/><path d="M2.500 3.500c2-2 3.500-2.500 5.500-2.500" stroke="#eee" stroke-width=".8" fill="none"/></svg><svg width="16" height="10" style="left:1206px;top:502px" viewBox="0 0 16 10"><path d="M0.500 5c2-3 4.500-4.500 7.500-4.500s5.500 1.500 7.500 4.500c-2 3-4.500 4.500-7.500 4.500s-5.500-1.500-7.500-4.500z" fill="#bdbdbd"/><circle cx="8" cy="5" r="3.300" fill="#4a4a4a"/><circle cx="8" cy="5" r="1.600" fill="#bdbdbd"/><path d="M2.500 3.500c2-2 3.500-2.500 5.500-2.500" stroke="#eee" stroke-width=".8" fill="none"/></svg>
<div id="lthumb1" class="abs"><svg width="32" height="24" style="left:-1px;top:0"><use href="#girl"/></svg></div>
<svg width="38" height="30" style="left:1230px;top:460px" viewBox="0 0 38 30"><path d="M1.500 8v-6.500h7M29.500 1.500h7v6.500M36.500 22v6.500h-7M8.500 28.500h-7v-6.500" fill="none" stroke="#f2f2f2" stroke-width="1"/></svg>
<div id="lthumb2" class="abs"></div>
<div class="abs" style="left:1274px;top:467px;font-size:12px;line-height:17px;color:#fff;white-space:nowrap">图层 <span style="font-family:'Liberation Serif',serif;font-size:13px">1</span></div>
<div class="abs" style="left:1276px;top:499px;font-size:12px;line-height:17px;color:#f0f0f0;white-space:nowrap;transform:skewX(-13deg)">背景</div>
<svg width="12" height="14" style="left:1396px;top:501px" viewBox="0 0 12 14"><rect x="1.500" y="6.500" width="9" height="6.500" rx=".8" fill="#8f8f8f" stroke="#cfcfcf"/><path d="M3.500 6.500v-2.500a2.500 2.500 0 0 1 5 0v2.500" fill="none" stroke="#cfcfcf" stroke-width="1.300"/><rect x="5.400" y="8.500" width="1.300" height="2.500" fill="#4a4a4a"/></svg>
<div id="layempty" class="abs"></div><div id="layscroll" class="abs"></div>
<div id="layfoot" class="abs"><svg width="240" height="17" style="left:0;top:0" viewBox="1199 842.500 240 17"><path d="M1238.500 849.500h3.500a2 2 0 0 1 0 4h-3.500a2 2 0 0 1 0-4zM1245 849.500h3.500a2 2 0 0 1 0 4h-3.500a2 2 0 0 1 0-4z" fill="none" stroke="#a0a0a0" stroke-width="1.400"/><path d="M1241 851.500h5" stroke="#a0a0a0" stroke-width="1.400"/><text x="1264" y="856" font-family="Liberation Serif,serif" font-style="italic" font-size="14" fill="#d0d0d0">fx</text><path d="M1277 855h4l-2 2.500z" fill="#d0d0d0"/><rect x="1291" y="846" width="13" height="10" fill="#cfcfcf"/><circle cx="1297.500" cy="851" r="2.800" fill="#454545"/><circle cx="1323.500" cy="850.500" r="5" fill="none" stroke="#cfcfcf" stroke-width="1.300"/><path d="M1320 854a5 5 0 0 0 7-7z" fill="#cfcfcf"/><path d="M1330 855h4l-2 2.500z" fill="#d0d0d0"/><path d="M1345 847h4l1.500 1.500h6.500v7.500h-12z" fill="#cfcfcf"/><path d="M1372 845.500h10.500v10.500h-6v-4.500h-4.500z" fill="#cfcfcf"/><path d="M1372 852l4.500 4.500v-4.500z" fill="#9a9a9a"/><path d="M1399.500 848h10M1402.500 848v-1.500h4v1.500" fill="none" stroke="#cfcfcf" stroke-width="1.300"/><path d="M1400.500 849.500h8l-0.800 7.500h-6.400z" fill="#cfcfcf"/><path d="M1403 851v5M1406 851v5" stroke="#454545" stroke-width=".9"/></svg></div>

<!-- ===== WIDGETS ===== -->
<div id="status" class="abs"><div id="stzoom">100%</div><div id="stinfo"><svg width="12" height="12" style="left:3px;top:3px" viewBox="0 0 12 12"><rect x="0.500" y="0.500" width="9" height="9" fill="none" stroke="#c8c8c8"/></svg><span>文档:452.2K/643.3K</span><svg width="6" height="8" style="left:193px;top:4px" viewBox="0 0 6 8"><path d="M0.500 0.500l4.500 3.500-4.500 3.500z" fill="#d0d0d0"/></svg></div></div>
<div id="sgbar" class="abs"><svg width="182" height="24" style="left:-5px;top:-1px" viewBox="1258 732 182 24"><text x="1296" y="751" text-anchor="middle" font-family="Liberation Sans,Noto Sans CJK SC,sans-serif" font-weight="bold" font-size="15" fill="#1e6fc0">中</text><path d="M1321.500 737.500a7.500 7.500 0 1 1-9.500 10.500 8 8 0 0 0 9.500-10.500z" fill="#1e6fc0"/><circle cx="1336.500" cy="741" r="1.800" fill="none" stroke="#1e6fc0" stroke-width="1.400"/><path d="M1343 746.500c1.500 0 2 1.500 1 3l-2 2.500 0.500-3c-1-1-0.500-2.500 0.500-2.500z" fill="#1e6fc0" stroke="#1e6fc0" stroke-width=".8"/><rect x="1354.500" y="739.500" width="15" height="10" rx="1" fill="#1e6fc0"/><path d="M1356.500 742h11M1356.500 744.500h11" stroke="#fff" stroke-width="1.200" stroke-dasharray="1.500 1"/><path d="M1358.500 747.500h7" stroke="#fff" stroke-width="1.300"/><circle cx="1384" cy="740.500" r="3" fill="#c4c8cc"/><path d="M1378 751c0-5 3-7 6-7s6 2 6 7z" fill="#c4c8cc"/><text x="1388.500" y="752" text-anchor="middle" font-family="Liberation Sans,sans-serif" font-weight="bold" font-size="8" fill="#fff" stroke="#b8bcc0" stroke-width=".6">14</text><path d="M1399 741l4.500-3c1 1.500 4 1.500 5 0l4.500 3-2 3-1.500-1v8h-7v-8l-1.500 1z" fill="#1e6fc0"/><path d="M1434.500 741.500a4 4 0 0 1-5.500 2.500l-5.500 6.500-2-2 6.500-5.500a4 4 0 0 1 3-5.500l-1.500 3 2 2z" fill="#1e6fc0"/></svg></div>
<svg width="30" height="27" style="left:1254px;top:730px" viewBox="0 0 30 27"><path d="M2 6.500l22-5.500c2 0 3.500 1 4 3l1 15c0 2-1 3.500-3 4l-17 3c-2 0-3.500-1-4-3l-4-12c-.5-2 .5-4 1-4.500z" fill="#f0521f"/><text x="15" y="22" text-anchor="middle" font-family="Liberation Sans,sans-serif" font-weight="bold" font-style="italic" font-size="24" fill="#fff" transform="rotate(-6 15 14)">S</text></svg>
<div id="pill" class="abs"><svg width="92" height="38" style="left:0;top:0" viewBox="1298 701 92 38"><path d="M1319 709l-3 3.500h2v4h2v-4h2z" fill="#e8503c"/><path d="M1319 731.500l-3-3.500h2v-4h2v4h2z" fill="#2e9e50"/><circle cx="1374.700" cy="720" r="8.500" fill="#3c7fe0" stroke="#c4ccd8" stroke-width="1"/><path d="M1374.700 715.500v9M1370.200 720h9" stroke="#fff" stroke-width="2"/><circle cx="1381.300" cy="713.700" r="3.700" fill="#e43a3a"/></svg><span style="top:6px">0K/s</span><span style="top:21px">0K/s</span></div>
<svg width="50" height="50" style="left:1263px;top:694px" viewBox="0 0 50 50"><defs><clipPath id="bc"><circle cx="25" cy="24.500" r="21.500"/></clipPath><linearGradient id="capg" x1="0" y1="0" x2="0" y2="1"><stop offset="0" stop-color="#1f7a52"/><stop offset="1" stop-color="#2f8a5e"/></linearGradient></defs><circle cx="25" cy="24.500" r="24" fill="#f4f6f4" stroke="#9aa09a" stroke-width=".6"/><circle cx="25" cy="24.500" r="21.500" fill="#3fc060" stroke="#1f8a44" stroke-width="1"/><rect x="0" y="0" width="50" height="15.500" fill="url(#capg)" clip-path="url(#bc)"/><path d="M3 15.500h44" stroke="#8fe0a8" stroke-width=".8" clip-path="url(#bc)"/><ellipse cx="25" cy="7.500" rx="5" ry="1.500" fill="#dff5e6" opacity=".8"/><text x="24.500" y="30" text-anchor="middle" font-family="Liberation Sans,sans-serif" font-size="14" fill="#eafaf0">69%</text></svg>

<!-- ===== TASKBAR ===== -->
<div id="taskbar" class="abs"><div id="tbclouds"></div><div id="tbshade"></div>
<svg width="40" height="40" style="left:7px;top:0" viewBox="0 0 40 40"><defs><radialGradient id="orb" cx=".5" cy=".75" r=".75"><stop offset="0" stop-color="#5fd0ff"/><stop offset=".45" stop-color="#1f7fd0"/><stop offset="1" stop-color="#0b2f78"/></radialGradient><linearGradient id="orbhi" x1="0" y1="0" x2="0" y2="1"><stop offset="0" stop-color="#fff" stop-opacity=".75"/><stop offset="1" stop-color="#fff" stop-opacity=".08"/></linearGradient></defs><circle cx="20" cy="20" r="18.500" fill="url(#orb)" stroke="#1a3a66" stroke-width="1"/><circle cx="20" cy="20" r="17.500" fill="none" stroke="#9fd6ff" stroke-opacity=".6"/><path d="M4.500 17a15.500 15.500 0 0 1 31 0c-9-4-22-4-31 0z" fill="url(#orbhi)"/><g transform="translate(19.500 20.500) scale(1.280) translate(-18.700 -20.500)"><path d="M11.500 13.500c2.500-1.500 5-1.500 7.500 0l-1.500 6c-2.500-1.500-5-1.500-7.500 0z" fill="#f0532a"/><path d="M20.500 14c2.500 1.500 5 1.500 7.500 0l-1.500 6c-2.500 1.500-5 1.500-7.500 0z" fill="#8cc63f"/><path d="M9.500 21c2.500-1.500 5-1.500 7.500 0l-1.500 6c-2.500-1.500-5-1.500-7.500 0z" fill="#3ea0e8"/><path d="M18.500 21.500c2.500 1.500 5 1.500 7.500 0l-1.500 6c-2.500 1.500-5 1.500-7.500 0z" fill="#fdc827"/></g></svg>
<div class="tbgrip" style="left:58px"></div>
<div class="tbbtn" style="left:76px"></div><div class="tbbtn b2" style="left:138px"></div>
<div id="psicon" class="abs">Ps</div>
<svg width="30" height="30" style="left:152px;top:5px" viewBox="0 0 30 30"><circle cx="15" cy="15" r="14" fill="#2aa5ec"/><circle cx="15" cy="15" r="6.500" fill="#fff"/><path d="M24.500 5.500c-1 5-5 9-9 11.500l-3-3c2.500-4 7-8 12-8.500zM5.500 24.500c1-5 5-9 9-11.500l3 3c-2.500 4-7 8-12 8.500z" fill="#fff"/></svg>
<div class="tbgrip" style="left:1014px"></div>
<div class="abs tbt" style="left:1028px;top:11px;font-size:13px;line-height:18px">桌面</div>
<svg width="10" height="8" style="left:1059px;top:6px" viewBox="0 0 10 8"><path d="M1 1l3 3-3 3M5.500 1l3 3-3 3" fill="none" stroke="#fff" stroke-width="1.400"/></svg>
<div class="tbgrip" style="left:1077px"></div>
<div class="abs tbt" style="left:1095px;top:11px;font-family:'Liberation Mono',monospace;font-size:12px;line-height:14px;transform:scaleX(.92);transform-origin:left">CH</div>
<svg width="18" height="20" style="left:1115px;top:8px" viewBox="0 0 18 20"><rect x="1.500" y="2" width="15.500" height="16" rx="3" fill="#f0501e" transform="rotate(-9 9 10)"/><text x="0" y="0" text-anchor="middle" font-family="Liberation Sans,sans-serif" font-weight="bold" font-style="italic" font-size="14" fill="#fff" transform="translate(8.800 15) scale(1.250 1)">S</text></svg>
<svg width="18" height="18" style="left:1137px;top:9px" viewBox="0 0 18 18"><defs><radialGradient id="hp" cx=".4" cy=".3" r=".8"><stop offset="0" stop-color="#3c50d8"/><stop offset="1" stop-color="#070a78"/></radialGradient></defs><circle cx="9.500" cy="9" r="7.200" fill="url(#hp)" stroke="#c8d0e0" stroke-width="1.200"/><text x="9" y="13.500" text-anchor="middle" font-family="Liberation Sans,sans-serif" font-weight="bold" font-size="12" fill="#fff">?</text></svg>
<svg width="12" height="20" style="left:1162px;top:7px" viewBox="0 0 12 20"><path d="M4.500 1.500h6v3.500h-6zM1.500 4.500h6v3.500h-6z" fill="none" stroke="#fff" stroke-width="1.200"/><path d="M3 15h6l-3 3.500z" fill="#fff"/></svg>
<svg width="18" height="18" style="left:1181px;top:12px" viewBox="0 0 18 18"><rect x="0.500" y="0.500" width="17" height="17" rx="2" fill="#3cb83c"/><path d="M9 3l6 6.500h-3.500v5.500h-5v-5.500h-3.500z" fill="#fff"/></svg>
<svg width="18" height="18" style="left:1205px;top:12px" viewBox="0 0 18 18"><rect x="0.500" y="0.500" width="17" height="17" rx="2" fill="#2b9bf0"/><path d="M3 7.500a8.500 8.500 0 0 1 12 0M5.200 10.200a5.500 5.500 0 0 1 7.600 0" fill="none" stroke="#fff" stroke-width="1.800" stroke-linecap="round"/><circle cx="9" cy="13.500" r="1.600" fill="#fff"/></svg>
<svg width="18" height="18" style="left:1229px;top:12px" viewBox="0 0 18 18"><path d="M9 0.500c2.500 1.500 5 2 8 2 0 7-2.500 12-8 15-5.500-3-8-8-8-15 3 0 5.500-0.500 8-2z" fill="#f2f4ee" stroke="#c8ccc4" stroke-width=".6"/><path d="M9 3c2 1 3.800 1.500 5.800 1.500 0 5-2 8.500-5.800 11-3.800-2.500-5.800-6-5.800-11 2 0 3.800-0.500 5.800-1.500z" fill="#4b9a22"/><path d="M10.500 4.500l-4 5.500h2.500l-1.500 4.500 4.500-6h-2.500z" fill="#fff"/></svg>
<svg width="18" height="18" style="left:1253px;top:12px" viewBox="0 0 18 18"><circle cx="9" cy="9" r="8.300" fill="#f2e300"/><path d="M2 5a8.300 8.300 0 0 1 13-2.500c-3-1-8-0.500-11 4zM16 13a8.300 8.300 0 0 1-13 2.500c3 1 8 0.500 11-4z" fill="#5aa820"/><path d="M9 4.500v9M4.500 9h9" stroke="#1d6a10" stroke-width="2.400"/></svg>
<svg width="18" height="16" style="left:1278px;top:14px" viewBox="0 0 18 16"><path d="M3 1.500h11l3 5v4.500h-16.500v-4.500z" fill="#d6d8da" stroke="#9a9ea4" stroke-width=".6"/><path d="M0.500 7h16.500v4h-16.500z" fill="#b4b8bc"/><path d="M5 9.500l3 4 6-8.500" fill="none" stroke="#2fb02f" stroke-width="2.600"/></svg>
<svg width="18" height="14" style="left:1301px;top:14px" viewBox="0 0 18 14"><path d="M1.500 12.500v-1.500M5 12.500v-3.500M8.500 12.500v-6M12 12.500v-8.500M15.500 12.500v-11.500" stroke="#fff" stroke-width="2.400"/></svg>
<svg width="18" height="18" style="left:1325px;top:12px" viewBox="0 0 18 18"><path d="M1.500 6.500h3l4-4.500v14l-4-4.500h-3z" fill="#f4f4f4" stroke="#666" stroke-width=".6"/><path d="M10.500 6a4 4 0 0 1 0 6M12.500 3.500a7 7 0 0 1 0 11" fill="none" stroke="#fff" stroke-width="1.400"/></svg>
<div class="abs tbt" style="left:1347px;top:5px;width:80px;text-align:center;font-size:12px;line-height:15px;letter-spacing:.3px">10:05</div><div class="abs tbt" style="left:1347px;top:23px;width:80px;text-align:center;font-size:12px;line-height:15px;letter-spacing:.3px">2015/10/6</div>
<div id="showdesk" class="abs"></div>
</div>

<!-- ===== EDIT MENU ===== -->
<div id="editmenu" class="abs">
  <div class="it"><span class="l">还原粘贴(O)</span><span class="s">Ctrl+Z</span></div>
  <div class="it dis"><span class="l">前进一步(W)</span><span class="s">Shift+Ctrl+Z</span></div>
  <div class="it"><span class="l">后退一步(K)</span><span class="s">Alt+Ctrl+Z</span></div>
  <div class="sep"></div>
  <div class="it dis"><span class="l">渐隐(D)...</span><span class="s">Shift+Ctrl+F</span></div>
  <div class="sep"></div>
  <div class="it dis"><span class="l">剪切(T)</span><span class="s">Ctrl+X</span></div>
  <div class="it dis"><span class="l">拷贝(C)</span><span class="s">Ctrl+C</span></div>
  <div class="it dis"><span class="l">合并拷贝(Y)</span><span class="s">Shift+Ctrl+C</span></div>
  <div class="it hl"><span class="l">粘贴(P)</span><span class="s">Ctrl+V</span></div>
  <div class="it"><span class="l">选择性粘贴(I)</span><span class="ar"></span></div>
  <div class="it dis"><span class="l">清除(E)</span></div>
  <div class="sep"></div>
  <div class="it dis"><span class="l">拼写检查(H)...</span></div>
  <div class="it dis"><span class="l">查找和替换文本(X)...</span></div>
  <div class="sep"></div>
  <div class="it"><span class="l">填充(L)...</span><span class="s">Shift+F5</span></div>
  <div class="it"><span class="l">描边(S)...</span></div>
  <div class="sep"></div>
  <div class="it"><span class="l">内容识别缩放</span><span class="s">Alt+Shift+Ctrl+C</span></div>
  <div class="it"><span class="l">操控变形</span></div>
  <div class="it"><span class="l">透视变形</span></div>
  <div class="it"><span class="l">自由变换(F)</span><span class="s">Ctrl+T</span></div>
  <div class="it"><span class="l">变换(A)</span><span class="ar"></span></div>
  <div class="it dis"><span class="l">自动对齐图层...</span></div>
  <div class="it dis"><span class="l">自动混合图层...</span></div>
  <div class="sep"></div>
  <div class="it"><span class="l">定义画笔预设(B)...</span></div>
  <div class="it"><span class="l">定义图案...</span></div>
  <div class="it dis"><span class="l">定义自定形状...</span></div>
  <div class="sep"></div>
  <div class="it"><span class="l">清理(R)</span><span class="ar"></span></div>
  <div class="sep"></div>
  <div class="it"><span class="l">Adobe PDF 预设...</span></div>
  <div class="it"><span class="l">预设</span><span class="ar"></span></div>
  <div class="it"><span class="l">远程连接...</span></div>
  <div class="sep"></div>
  <div class="it"><span class="l">颜色设置(G)...</span><span class="s">Shift+Ctrl+K</span></div>
  <div class="it"><span class="l">指定配置文件...</span></div>
  <div class="it"><span class="l">转换为配置文件(V)...</span></div>
  <div class="sep"></div>
  <div class="it"><span class="l">键盘快捷键...</span><span class="s">Alt+Shift+Ctrl+K</span></div>
  <div class="it"><span class="l">菜单(U)...</span><span class="s">Alt+Shift+Ctrl+M</span></div>
  <div class="it"><span class="l">首选项(N)</span><span class="ar"></span></div>
  <div class="it dis"><span class="l">同步设置(E)</span><span class="ar"></span></div>
</div>

</body>
</html>
